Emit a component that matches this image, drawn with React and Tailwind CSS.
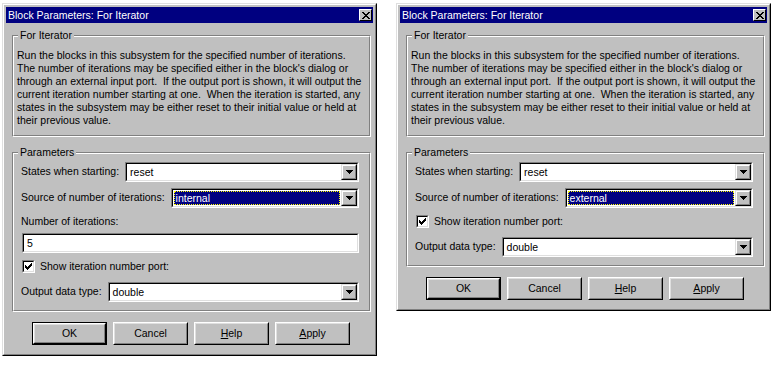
import React from "react";

const FONT = "font-['Liberation_Sans',Arial,sans-serif] text-[10.5px] text-black";

function CloseBtn() {
  return (
    <div className="w-[13px] h-[12px] mr-[1px] border border-t-white border-l-white border-b-black border-r-black bg-[#c0c0c0] flex items-center justify-center">
      <svg width="8" height="7" viewBox="0 0 8 7" shapeRendering="crispEdges">
        <path d="M0 0h2v1H0zM6 0h2v1H6zM1 1h2v1H1zM5 1h2v1H5zM2 2h4v1H2zM3 3h2v1H3zM2 4h4v1H2zM1 5h2v1H1zM5 5h2v1H5zM0 6h2v1H0zM6 6h2v1H6z" fill="#000" />
      </svg>
    </div>
  );
}

function ArrowBtn() {
  return (
    <div className="w-[16px] h-full border border-t-[#dfdfdf] border-l-[#dfdfdf] border-b-black border-r-black bg-[#c0c0c0]">
      <div className="w-full h-full border border-t-white border-l-white border-b-[#808080] border-r-[#808080] flex items-center justify-center">
        <svg width="7" height="4" viewBox="0 0 7 4" shapeRendering="crispEdges">
          <path d="M0 0h7v1H0zM1 1h5v1H1zM2 2h3v1H2zM3 3h1v1H3z" fill="#000" />
        </svg>
      </div>
    </div>
  );
}

function Dropdown({ value, focused }) {
  return (
    <div className="flex-1 h-[20px] border border-t-[#808080] border-l-[#808080] border-b-white border-r-white">
      <div className="h-full flex border border-t-black border-l-black border-b-[#dfdfdf] border-r-[#dfdfdf] bg-white">
        {focused ? (
          <div className="flex-1 m-[1px] bg-[#000080] border border-dotted border-[#ffff00] text-white flex items-center pl-[1px] leading-none">
            {value}
          </div>
        ) : (
          <div className="flex-1 flex items-center pl-[3px] leading-none">{value}</div>
        )}
        <ArrowBtn />
      </div>
    </div>
  );
}

function EditBox({ value }) {
  return (
    <div className="ml-[1px] h-[20px] border border-t-[#808080] border-l-[#808080] border-b-white border-r-white">
      <div className="h-full flex items-center pl-[3px] border border-t-black border-l-black border-b-[#dfdfdf] border-r-[#dfdfdf] bg-white leading-none">
        {value}
      </div>
    </div>
  );
}

function Checkbox() {
  return (
    <div className="w-[13px] h-[13px] border border-t-[#808080] border-l-[#808080] border-b-white border-r-white">
      <div className="w-full h-full border border-t-black border-l-black border-b-[#dfdfdf] border-r-[#dfdfdf] bg-white flex items-center justify-center">
        <svg width="7" height="7" viewBox="0 0 7 7" shapeRendering="crispEdges">
          <path d="M6 0h1v1H6zM5 1h2v1H5zM0 2h1v1H0zM4 2h3v1H4zM0 3h2v1H0zM3 3h3v1H3zM0 4h5v1H0zM1 5h3v1H1zM2 6h1v1H2z" fill="#000" />
        </svg>
      </div>
    </div>
  );
}

function Button({ children, isDefault }) {
  const inner = (
    <div className="w-full h-full border border-t-white border-l-white border-b-black border-r-black">
      <div className="w-full h-full border border-t-[#dfdfdf] border-l-[#dfdfdf] border-b-[#808080] border-r-[#808080] flex items-center justify-center leading-none">
        {children}
      </div>
    </div>
  );
  return isDefault ? (
    <div className="w-[75px] h-[23px] border border-black bg-[#c0c0c0]">{inner}</div>
  ) : (
    <div className="w-[75px] h-[23px] bg-[#c0c0c0]">{inner}</div>
  );
}

function Group({ label, className, innerClass, children }) {
  return (
    <div className={"relative border border-t-[#808080] border-l-[#808080] border-b-white border-r-white " + className}>
      <span className="absolute top-[-7px] left-[5px] px-[2px] bg-[#c0c0c0] leading-[13px]">{label}</span>
      <div className={"border border-t-white border-l-white border-b-[#808080] border-r-[#808080] " + innerClass}>
        {children}
      </div>
    </div>
  );
}

function Dialog({ external }) {
  return (
    <div className={"w-[375px] border border-t-[#dfdfdf] border-l-[#dfdfdf] border-b-black border-r-black bg-[#c0c0c0] " + FONT}>
      <div className="border border-t-white border-l-white border-b-[#808080] border-r-[#808080] p-[2px]">
        <div className="h-[16px] bg-[#000080] flex items-center justify-between">
          <span className="pl-[2px] text-white text-[10.5px] leading-none">Block Parameters: For Iterator</span>
          <CloseBtn />
        </div>
        <div className="pl-[6px] pr-[2px] pt-[12px] pb-[7px]">
          <Group label="For Iterator" className="" innerClass="pl-[3px] pt-[12px] pb-[8px]">
            <div className="leading-[13px] whitespace-pre">
              <div>Run the blocks in this subsystem for the specified number of iterations.</div>
              <div>The number of iterations may be specified either in the block's dialog or</div>
              <div>through an external input port.  If the output port is shown, it will output the</div>
              <div>current iteration number starting at one.  When the iteration is started, any</div>
              <div>states in the subsystem may be either reset to their initial value or held at</div>
              <div>their previous value.</div>
            </div>
          </Group>
          <Group label="Parameters" className="mt-[15px]" innerClass="pl-[7px] pr-[10px] pt-[8px] pb-[8px] flex flex-col">
            <div className="flex items-center gap-[6px]">
              <span className="whitespace-nowrap">States when starting:</span>
              <Dropdown value="reset" />
            </div>
            <div className="flex items-center gap-[6px] mt-[6px]">
              <span className="whitespace-nowrap">Source of number of iterations:</span>
              <Dropdown value={external ? "external" : "internal"} focused />
            </div>
            {!external && (
              <>
                <div className="mt-[7px] h-[13px] leading-[13px]">Number of iterations:</div>
                <div className="mt-[5px]">
                  <EditBox value="5" />
                </div>
              </>
            )}
            <div className="mt-[7px] flex items-center gap-[5px] ml-[1px] h-[13px]">
              <Checkbox />
              <span className="leading-[13px]">Show iteration number port:</span>
            </div>
            <div className="flex items-center gap-[6px] mt-[9px]">
              <span className="whitespace-nowrap">Output data type:</span>
              <Dropdown value="double" />
            </div>
          </Group>
          <div className="mt-[10px] flex gap-[6px] pl-[20px]">
            <Button isDefault>OK</Button>
            <Button>Cancel</Button>
            <Button><span><span className="underline">H</span>elp</span></Button>
            <Button><span><span className="underline">A</span>pply</span></Button>
          </div>
        </div>
      </div>
    </div>
  );
}

export default function App() {
  return (
    <div className="w-[777px] h-[386px] bg-white flex items-start pt-[3px] pl-[2px] gap-[19px] overflow-hidden">
      <Dialog />
      <Dialog external />
    </div>
  );
}
